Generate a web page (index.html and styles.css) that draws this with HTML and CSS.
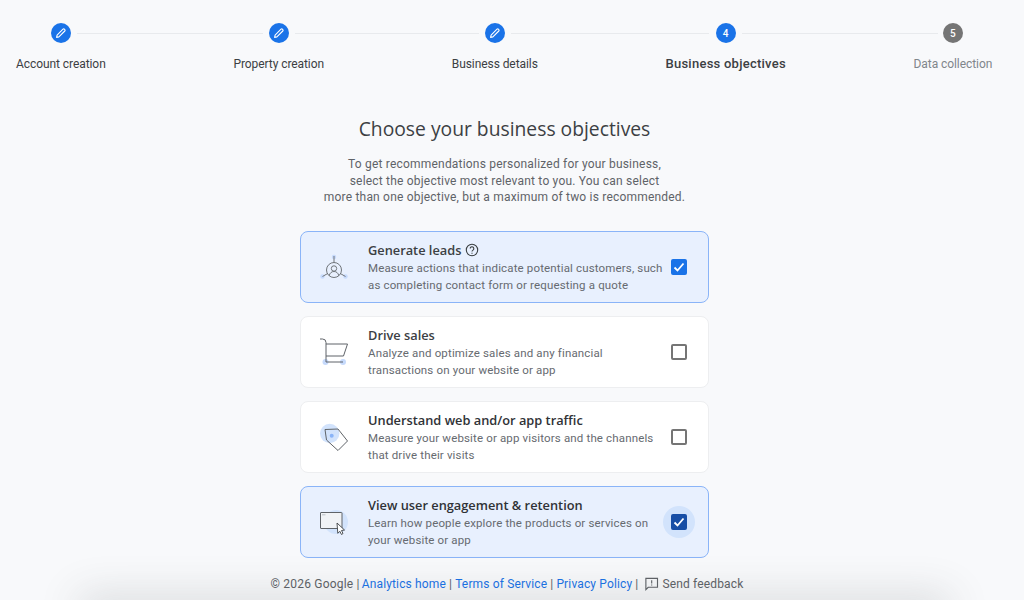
FILE: index.html
```html
<!DOCTYPE html>
<html lang="en">
<head>
<meta charset="utf-8">
<title>Business objectives</title>
<link rel="stylesheet" href="styles.css">
</head>
<body>
<nav class="stepper">
  <div class="step line-a"><span class="dot"><svg class="pencil" viewBox="0 0 12 12"><path d="M1.600 10.400l.5-2.300 5.900-5.900a1 1 0 0 1 1.400 0l.4.4a1 1 0 0 1 0 1.400L3.900 9.900z" fill="none" stroke="#fff" stroke-width="1.100" stroke-linejoin="round"/></svg></span><span class="label">Account creation</span></div>
  <div class="step line-b"><span class="dot"><svg class="pencil" viewBox="0 0 12 12"><path d="M1.600 10.400l.5-2.300 5.900-5.900a1 1 0 0 1 1.400 0l.4.4a1 1 0 0 1 0 1.400L3.900 9.900z" fill="none" stroke="#fff" stroke-width="1.100" stroke-linejoin="round"/></svg></span><span class="label">Property creation</span></div>
  <div class="step line-c"><span class="dot"><svg class="pencil" viewBox="0 0 12 12"><path d="M1.600 10.400l.5-2.300 5.900-5.900a1 1 0 0 1 1.400 0l.4.4a1 1 0 0 1 0 1.400L3.900 9.900z" fill="none" stroke="#fff" stroke-width="1.100" stroke-linejoin="round"/></svg></span><span class="label">Business details</span></div>
  <div class="step line-d current"><span class="dot">4</span><span class="label">Business objectives</span></div>
  <div class="step pending"><span class="dot">5</span><span class="label">Data collection</span></div>
</nav>

<main class="content">
  <h1 class="title">Choose your business objectives</h1>
  <p class="intro">To get recommendations personalized for your business,<br>select the objective most relevant to you. You can select<br>more than one objective, but a maximum of two is recommended.</p>

  <div class="cards">
    <section class="card selected">
      <svg class="art" viewBox="0 0 28 28" fill="none">
        <circle cx="14" cy="4" r="2.200" fill="#c6dafc"/><circle cx="2.500" cy="23.500" r="2.200" fill="#c6dafc"/><circle cx="25.500" cy="23.500" r="2.200" fill="#c6dafc"/>
        <g stroke="#70757a" stroke-width="1">
          <path d="M14 3v6.500M7.700 20.500l-5.200 3M20.300 20.500l5.200 3"/>
          <circle cx="14" cy="17" r="7.500"/><circle cx="14" cy="15.500" r="2.700"/>
          <path d="M9.200 22.800c.5-2.900 2.500-4.300 4.800-4.300s4.300 1.400 4.800 4.300"/>
        </g>
      </svg>
      <div class="copy">
        <h2 class="card-title">Generate leads <svg class="help" viewBox="0 0 14 14" fill="none" stroke="#3c4043" stroke-width="1.100"><circle cx="7" cy="7" r="5.700"/><path d="M5.200 5.600a1.800 1.800 0 1 1 2.800 1.500c-.7.500-1 .8-1 1.500"/><path d="M7 9.800v1"/></svg></h2>
        <p class="card-text">Measure actions that indicate potential customers, such as completing contact form or requesting a quote</p>
      </div>
      <span class="slot"><span class="check on"><svg viewBox="0 0 14 14" fill="none" stroke="#fff" stroke-width="1.800"><path d="M2.500 7.500l3 3 6-7"/></svg></span></span>
    </section>

    <section class="card">
      <svg class="art" viewBox="0 0 28 28" fill="none">
        <circle cx="5.500" cy="24" r="3" fill="#c6dafc"/><circle cx="23" cy="24" r="3" fill="#c6dafc"/>
        <path d="M0 1h2.500q3.500 0 3.500 3.500V24h17M6 6h21.500L23.500 18H6" stroke="#5f6368" stroke-width="1"/>
      </svg>
      <div class="copy">
        <h2 class="card-title">Drive sales</h2>
        <p class="card-text">Analyze and optimize sales and any financial transactions on your website or app</p>
      </div>
      <span class="slot"><span class="check"></span></span>
    </section>

    <section class="card">
      <svg class="art" viewBox="0 0 28 28" fill="none">
        <circle cx="9.700" cy="10.500" r="9.700" fill="#d2e3fc"/><circle cx="11.700" cy="12.700" r="2" fill="#8ab4f8"/>
        <path d="M5 6.500l13-.5 9.500 12-9.500 9.500-11.500-10.500z" stroke="#5f6368" stroke-width="1"/>
      </svg>
      <div class="copy">
        <h2 class="card-title dark">Understand web and/or app traffic</h2>
        <p class="card-text">Measure your website or app visitors and the channels that drive their visits</p>
      </div>
      <span class="slot"><span class="check"></span></span>
    </section>

    <section class="card selected">
      <svg class="art" viewBox="0 0 28 28" fill="none">
        <circle cx="16" cy="14" r="12" fill="#d2e3fc"/>
        <rect x=".5" y="4.500" width="21.500" height="16" rx=".5" fill="#f1f3f6" stroke="#5f6368" stroke-width="1"/>
        <path d="M2 6.800h3.500" stroke="#bdc1c6" stroke-width="1"/>
        <path d="M17 15l7.500 7-3 .5 1.500 3-1.500 1-1.700-3.200-2 2z" fill="#fff" stroke="#3c4043" stroke-width=".9"/>
      </svg>
      <div class="copy">
        <h2 class="card-title dark">View user engagement &amp; retention</h2>
        <p class="card-text">Learn how people explore the products or services on your website or app</p>
      </div>
      <span class="slot focus"><span class="check on"><svg viewBox="0 0 14 14" fill="none" stroke="#fff" stroke-width="1.800"><path d="M2.500 7.500l3 3 6-7"/></svg></span></span>
    </section>
  </div>
</main>

<footer class="footer">
  <span class="copyright">© 2026 Google |</span>
  <a href="#">Analytics home</a><span>|</span>
  <a href="#">Terms of Service</a><span>|</span>
  <a href="#">Privacy Policy</a><span>|</span>
  <span class="feedback"><svg viewBox="0 0 16 16" fill="none" stroke="#5f6368" stroke-width="1.200"><path d="M2 2.500h12.400v9.500H4.500L2 14.500z"/><path d="M8.200 4.500v3.500M8.200 9v1.200"/></svg>Send feedback</span>
</footer>
<div class="edge"></div>
</body>
</html>
```
FILE: styles.css
```css
* { box-sizing: border-box; }
html, body { margin: 0; height: 600px; overflow: hidden; }
body {
  position: relative;
  background: #f8f9fb;
  font-family: Roboto, "Liberation Sans", sans-serif;
  color: #3c4043;
  display: flex;
  flex-direction: column;
}
.stepper {
  display: flex;
  gap: 127.700px;
  padding: 23px 0 0 16px;
  height: 80px;
}
.step {
  position: relative;
  display: flex;
  flex-direction: column;
  align-items: center;
  gap: 13px;
  flex: none;
}
.step::after {
  content: "";
  position: absolute;
  top: 10px;
  left: calc(50% + 16px);
  height: 1px;
  background: #e8eaed;
}
.line-a::after { width: 186px; }
.line-b::after { width: 184px; }
.line-c::after { width: 198px; }
.line-d::after { width: 196px; }
.dot {
  width: 20px;
  height: 20px;
  border-radius: 50%;
  background: #1a73e8;
  color: #fff;
  font-size: 10px;
  font-weight: 500;
  display: flex;
  align-items: center;
  justify-content: center;
}
.pencil { width: 12px; height: 12px; }
.label { font-size: 12px; line-height: 16px; letter-spacing: -.07px; color: #3c4043; white-space: nowrap; }
.current .label { font-size: 13px; font-weight: 500; letter-spacing: .25px; }
.pending .dot { background: #757575; }
.pending .label { color: #80868b; }

.content { display: flex; flex-direction: column; align-items: center; padding-right: 15px; }
.title {
  margin: 35px 0 0;
  font-family: "Open Sans", Roboto, sans-serif;
  font-size: 19.300px;
  line-height: 28px;
  font-weight: 400;
  color: #3c4043;
}
.intro {
  margin: 13px 0 0;
  font-size: 12px;
  line-height: 16.500px;
  letter-spacing: .2px;
  text-align: center;
  color: #5f6368;
}
.cards { margin-top: 25px; width: 409px; display: flex; flex-direction: column; gap: 13px; }
.card {
  height: 72px;
  display: flex;
  align-items: center;
  padding: 0 13px 0 19px;
  background: #fff;
  border: 1px solid #edeef0;
  border-radius: 8px;
}
.card.selected { background: #e8f0fe; border-color: #8ab4f8; }
.art { width: 28px; height: 28px; flex: none; }
.copy { margin-left: 20px; padding-top: 1px; width: 295px; flex: none; }
.card-title {
  margin: 0 0 1px;
  font-family: "Open Sans", Roboto, sans-serif;
  font-size: 12.800px;
  line-height: 18px;
  font-weight: 600;
  color: #3c4043;
  display: flex;
  align-items: center;
  gap: 4px;
}
.card-title.dark { color: #303236; }
.help { width: 14px; height: 14px; }
.card-text { margin: 0; font-size: 11.500px; line-height: 16.500px; letter-spacing: .15px; color: #666a70; }
.slot {
  width: 32px;
  height: 32px;
  margin-left: auto;
  border-radius: 50%;
  display: flex;
  align-items: center;
  justify-content: center;
  flex: none;
}
.slot.focus { background: #d2e3fc; }
.check {
  width: 16px;
  height: 16px;
  border: 2px solid #757575;
  border-radius: 2px;
  display: flex;
  align-items: center;
  justify-content: center;
}
.check.on { background: #1a73e8; border-color: #1a73e8; }
.focus .check.on { background: #174ea6; border-color: #174ea6; }
.check.on svg { width: 14px; height: 14px; flex: none; }
.footer {
  margin-top: 16px;
  display: flex;
  justify-content: center;
  align-items: center;
  gap: 3px;
  font-size: 12px;
  line-height: 20px;
  letter-spacing: .15px;
  color: #5f6368;
  padding-right: 10px;
}
.footer a { color: #1a73e8; text-decoration: none; }
.copyright { letter-spacing: .2px; margin-right: -1px; }
.feedback { display: inline-flex; align-items: center; gap: 3px; margin-left: 3px; }
.feedback svg { width: 15px; height: 15px; }
.edge {
  position: absolute;
  left: 85px;
  right: 80px;
  top: 601px;
  height: 20px;
  box-shadow: 0 0 40px 6px rgba(60, 64, 67, .17);
}
```
